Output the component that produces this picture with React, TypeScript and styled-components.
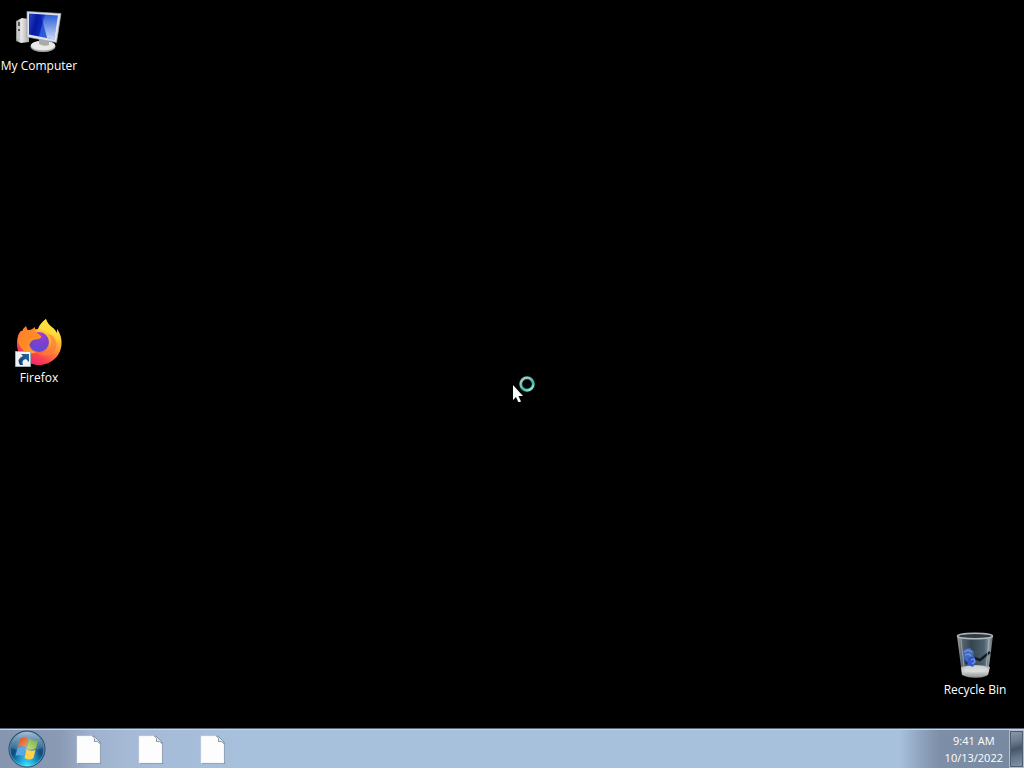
import React from "react";
import styled, { createGlobalStyle } from "styled-components";

const GlobalStyle = createGlobalStyle`
  * { box-sizing: border-box; }
  html, body { margin: 0; padding: 0; background: #000; }
  body, button { font-family: "Open Sans", "Noto Sans", sans-serif; font-size: 12px; }
`;

const Screen = styled.div`
  display: flex;
  flex-direction: column;
  min-height: 100vh;
  background: #000;
`;

const Desktop = styled.main`
  position: relative;
  flex: 1;
  overflow: hidden;
`;

const Shortcut = styled.button<{ $x: number; $y: number; $corner?: boolean }>`
  position: absolute;
  ${(p) => (p.$corner ? `right: ${p.$x}px; bottom: ${p.$y}px;` : `left: ${p.$x}px; top: ${p.$y}px;`)}
  display: flex;
  flex-direction: column;
  align-items: center;
  gap: 2px;
  width: 78px;
  padding: 0;
  border: 0;
  background: transparent;
  color: #fff;
  line-height: 16px;
  white-space: nowrap;
`;

const Pointer = styled.svg`
  position: absolute;
  left: 50%;
  top: 50%;
  margin-top: 8px;
`;

const Taskbar = styled.footer`
  display: flex;
  align-items: stretch;
  height: 40px;
  border-top: 1px solid #59677a;
  box-shadow: inset 0 1px 0 #c6d6e8;
  background: linear-gradient(90deg, #8796b0 0, #8b9ab4 60px, #9eb1cd 90px, #a5bad6 130px, #a7c0dc 240px, #a7c0dc calc(100% - 124px), #8fa4bf calc(100% - 104px), #7d8fa8 calc(100% - 84px), #76899f 100%);
`;

const StartButton = styled.button`
  width: 54px;
  padding: 0 0 0 8px;
  border: 0;
  background: transparent;
  display: flex;
  align-items: center;
`;

const Pinned = styled.nav`
  display: flex;
  flex: 1;
  padding-left: 4px;
`;

const PinnedButton = styled.button`
  display: flex;
  align-items: center;
  justify-content: center;
  width: 62px;
  padding: 2px 0 0;
  border: 0;
  background: transparent;
`;

const Clock = styled.button`
  display: flex;
  flex-direction: column;
  align-items: center;
  justify-content: center;
  padding: 0 6px;
  border: 0;
  background: transparent;
  color: #fff;
  font-size: 11px;
  line-height: 17px;
`;

const ShowDesktop = styled.button`
  width: 15px;
  margin-top: 1px;
  padding: 0;
  border: 1px solid #b0bdcb;
  outline: 1px solid #4f5d70;
  outline-offset: -2px;
  background: linear-gradient(165deg, #8b99aa 0%, #6f7d90 28%, #47576b 50%, #65758a 70%, #8796a8 100%);
`;

const ComputerIcon = () => (
  <svg width="48" height="48" viewBox="0 0 48 48" aria-hidden="true">
    <defs>
      <linearGradient id="pcScreen" x1="0" y1="0" x2="1" y2="0.25">
        <stop offset="0" stopColor="#2a49c8" />
        <stop offset=".3" stopColor="#0618a0" />
        <stop offset=".5" stopColor="#0a26b8" />
        <stop offset=".56" stopColor="#2a5ad8" />
        <stop offset="1" stopColor="#2b60dc" />
      </linearGradient>
      <linearGradient id="pcGlow" x1="0" y1="0" x2="0" y2="1">
        <stop offset="0" stopColor="#fff" stopOpacity="0" />
        <stop offset="1" stopColor="#fff" stopOpacity=".75" />
      </linearGradient>
      <linearGradient id="pcCase">
        <stop offset="0" stopColor="#8c8c8c" />
        <stop offset=".4" stopColor="#e9e9e9" />
        <stop offset="1" stopColor="#aaa" />
      </linearGradient>
    </defs>
    <path d="M1 13 7 10l7 1v23l-8 1-5-2z" fill="url(#pcCase)" />
    <path d="M2 14 5 13v19l-3-1z" fill="#c8c8c8" />
    <path d="M4 14v4M4 21v2" stroke="#333" strokeWidth="1.5" />
    <ellipse cx="28" cy="38.500" rx="12.500" ry="5.500" fill="#a8a8a8" />
    <ellipse cx="28" cy="37.500" rx="12" ry="4.800" fill="#e9e9e9" />
    <path d="m24 30 10 2v5q-5 2-10-1z" fill="#aaa" />
    <path d="m12 3.500 34 2-4.500 29-29.500-5.500z" fill="#e0e2e9" stroke="#9a9fac" strokeWidth=".7" />
    <path d="m14 5.500 29 2-4 24-25-5z" fill="url(#pcScreen)" />
    <path d="m26 6.500 17 1-4 24-7-1.500z" fill="url(#pcGlow)" />
  </svg>
);

const FirefoxIcon = () => (
  <svg width="48" height="48" viewBox="0 0 48 48" overflow="visible" aria-hidden="true">
    <defs>
      <linearGradient id="foxBody" x1=".85" y1="0.05" x2=".3" y2="1">
        <stop offset="0" stopColor="#fff04a" />
        <stop offset=".28" stopColor="#ffc832" />
        <stop offset=".55" stopColor="#ff8238" />
        <stop offset=".78" stopColor="#fb3f50" />
        <stop offset="1" stopColor="#e92474" />
      </linearGradient>
      <radialGradient id="foxGlobe" cx=".55" cy=".1" r=".9">
        <stop offset="0" stopColor="#a23bd4" />
        <stop offset=".5" stopColor="#7c40cf" />
        <stop offset="1" stopColor="#5a4bd6" />
      </radialGradient>
      <linearGradient id="foxHead" x1="0" y1="0" x2="1" y2="1">
        <stop offset="0" stopColor="#ff7a2c" />
        <stop offset=".6" stopColor="#ff8f24" />
        <stop offset="1" stopColor="#ffb82b" />
      </linearGradient>
      <linearGradient id="arrowBlue" x1="0" y1="1" x2="1" y2="0">
        <stop offset="0" stopColor="#173b70" />
        <stop offset="1" stopColor="#23689f" />
      </linearGradient>
    </defs>
    <path d="M23 9C25 4 28 1 31-1c1 4 4 7 7 9 2 2 3 3 4 5V9c3 4 5 9 4.500 15C46 36 36 45 24 45S2 36 2 24C2 18 3 14 6 11z" fill="url(#foxBody)" />
    <circle cx="24" cy="22" r="10" fill="url(#foxGlobe)" />
    <path d="M23 9C25 4 28 1 31-1c1 4 4 7 7 9 4 4 5 9 5 14-1-5-4-7-6-8 0 0-1 0-1 2-2-4-7-6-13-7z" fill="#ffdf3d" opacity=".7" />
    <path d="M30 13q4 1 6 6 2 8-4 12-5 3-11 1 10 7 18 0 6-10-3-17z" fill="#ff7a3a" opacity=".65" />
    <path d="M3 20Q3 15 6 11l1 1q1-4 4-6l2 5q5-2 7-4 0 4 1 5l5 4q1 2-3 3l-5 1q-3 2-4 5 2 7 8 7-9 4-14-2-5-5-5-10z" fill="url(#foxHead)" />
    <path d="M.5 31.500h15v15H.5z" fill="#f0f3f6" stroke="#a8adb5" />
    <path d="M5 45q-4-6 3-9l-2-2h8v8l-3-3q-5 1-3 6z" fill="url(#arrowBlue)" />
  </svg>
);

const RecycleIcon = () => (
  <svg width="48" height="48" viewBox="0 0 48 48" aria-hidden="true">
    <defs>
      <linearGradient id="binGlass">
        <stop offset="0" stopColor="#9aa2a7" />
        <stop offset=".16" stopColor="#56626b" />
        <stop offset=".4" stopColor="#34454f" />
        <stop offset=".75" stopColor="#4d606d" />
        <stop offset=".9" stopColor="#8e999f" />
        <stop offset="1" stopColor="#59656c" />
      </linearGradient>
      <linearGradient id="binBase" x1="0" x2="0" y1="0" y2="1">
        <stop offset="0" stopColor="#a5adb0" />
        <stop offset=".5" stopColor="#d4d7d4" />
        <stop offset="1" stopColor="#8d9395" />
      </linearGradient>
    </defs>
    <path d="m6 4 5 38q2 4 14 4 10 0 12-4l5-38z" fill="url(#binGlass)" />
    <path d="M10 35q15-4 29 0l-2 8q-12 5-26 0z" fill="url(#binBase)" />
    <ellipse cx="24.500" cy="37" rx="12" ry="3.500" fill="#e0e2de" opacity=".6" />
    <path d="m39 20-10 8-6-2" fill="none" stroke="#111b23" strokeWidth="2.500" />
    <path d="m11 21 3-4 5-1 4 4-1 5-4 1-2 5-4-2z" fill="#426bbb" />
    <path d="m17 28 6-4 2 5-3 6-5-2z" fill="#3557d2" />
    <path d="m13 20 4-2 4 2m-7 3 4-1 2 2m0 4 3-1 1 3-3 2" fill="none" stroke="#7699e6" strokeWidth="1.200" />
    <path d="m13 27 4 4-2 2z" fill="#172e73" />
    <path d="m10 7 3 28M38 7l-3 29" stroke="#bac2c7" opacity=".6" />
    <ellipse cx="24" cy="4" rx="17.500" ry="2.800" fill="#303a40" stroke="#aeb9be" strokeWidth="1.500" />
  </svg>
);

const StartOrb = () => (
  <svg width="38" height="38" viewBox="0 0 38 38" aria-hidden="true">
    <defs>
      <radialGradient id="orb" cx=".5" cy=".98" r=".9">
        <stop offset="0" stopColor="#4de9ff" />
        <stop offset=".28" stopColor="#16a0d0" />
        <stop offset=".58" stopColor="#0f4a7c" />
        <stop offset="1" stopColor="#3a6a90" />
      </radialGradient>
      <linearGradient id="orbShine" x1="0" y1="0" x2="0" y2="1">
        <stop offset="0" stopColor="#c6d8e4" stopOpacity=".75" />
        <stop offset="1" stopColor="#80a5bf" stopOpacity=".2" />
      </linearGradient>
      <radialGradient id="flagGlow">
        <stop offset="0" stopColor="#d5f5ff" stopOpacity=".6" />
        <stop offset="1" stopColor="#92dfff" stopOpacity="0" />
      </radialGradient>
      <linearGradient id="flagRed" x1="0" y1="0" x2="1" y2="1">
        <stop offset="0" stopColor="#d9481c" />
        <stop offset="1" stopColor="#f6a05a" />
      </linearGradient>
      <linearGradient id="flagGreen" x1="1" y1="0" x2="0" y2="1">
        <stop offset="0" stopColor="#6fae3c" />
        <stop offset="1" stopColor="#c5df83" />
      </linearGradient>
    </defs>
    <circle cx="19" cy="19" r="18" fill="url(#orb)" stroke="#27486a" />
    <circle cx="19" cy="19" r="17" fill="none" stroke="#8acbe3" opacity=".5" />
    <path d="M3 18a16 16 0 0 1 32 0q-16 5-32 0z" fill="url(#orbShine)" />
    <circle cx="19" cy="19" r="13" fill="url(#flagGlow)" />
    <path d="M12 9q4-3 8-1l-2 9q-4-2-8 0z" fill="url(#flagRed)" />
    <path d="M21 9q4 3 9 1l-2 8q-4 3-9 0z" fill="url(#flagGreen)" />
    <path d="M9.500 18q4-2 8 0l-2 8q-4-2-8 0z" fill="#5ba8e4" />
    <path d="M18.500 19q4 3 9 1l-2 8q-4 3-9 0z" fill="#ffd048" />
  </svg>
);

const PageIcon = () => (
  <svg width="26" height="30" viewBox="0 0 26 30" aria-hidden="true">
    <path d="M2 2h17l6 6v21H2z" fill="#66758a" opacity=".65" />
    <path d="M1 1h17l6 6v21H1z" fill="#fdfdfd" stroke="#e1e6eb" strokeWidth=".5" />
    <path d="M16.500 1q3 2 2 5.500 3-1 5.500 2V7l-6-6z" fill="#dfe6ec" stroke="#718095" strokeWidth=".8" />
  </svg>
);

const BusyPointer = () => (
  <Pointer width="24" height="30" viewBox="0 0 24 30" aria-hidden="true">
    <defs>
      <linearGradient id="busyRing" x1="0" y1="0" x2=".7" y2="1">
        <stop offset="0" stopColor="#b9d3d0" />
        <stop offset=".45" stopColor="#7fbab2" />
        <stop offset=".75" stopColor="#2cc4a6" />
        <stop offset="1" stopColor="#a2e7d7" />
      </linearGradient>
    </defs>
    <circle cx="15" cy="12" r="6.300" fill="none" stroke="#174b45" strokeWidth="3.500" />
    <circle cx="15" cy="12" r="6.300" fill="none" stroke="url(#busyRing)" strokeWidth="2.400" />
    <path d="M1 13v15l3-3 2.500 5.500 2.500-1L6.500 24H11z" fill="#f2fbf8" />
  </Pointer>
);

const pinned = ["Pinned item 1", "Pinned item 2", "Pinned item 3"];

export default function App() {
  return (
    <Screen>
      <GlobalStyle />
      <Desktop>
        <Shortcut $x={0} $y={8}><ComputerIcon />My Computer</Shortcut>
        <Shortcut $x={0} $y={320}><FirefoxIcon />Firefox</Shortcut>
        <Shortcut $x={10} $y={30} $corner><RecycleIcon />Recycle Bin</Shortcut>
        <BusyPointer />
      </Desktop>
      <Taskbar>
        <StartButton aria-label="Start"><StartOrb /></StartButton>
        <Pinned aria-label="Pinned programs">
          {pinned.map((name) => (
            <PinnedButton key={name} aria-label={name}><PageIcon /></PinnedButton>
          ))}
        </Pinned>
        <Clock><span>9:41 AM</span><span>10/13/2022</span></Clock>
        <ShowDesktop aria-label="Show desktop" />
      </Taskbar>
    </Screen>
  );
}
